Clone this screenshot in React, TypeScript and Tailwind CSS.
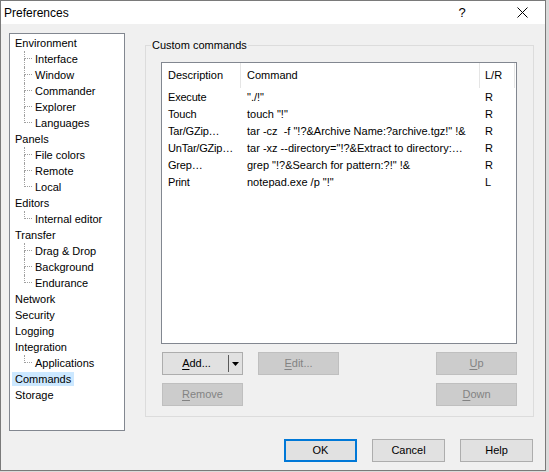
import React from "react";

type Node = { label: string; children?: string[]; selected?: boolean };

const TREE: Node[] = [
  { label: "Environment", children: ["Interface", "Window", "Commander", "Explorer", "Languages"] },
  { label: "Panels", children: ["File colors", "Remote", "Local"] },
  { label: "Editors", children: ["Internal editor"] },
  { label: "Transfer", children: ["Drag & Drop", "Background", "Endurance"] },
  { label: "Network" },
  { label: "Security" },
  { label: "Logging" },
  { label: "Integration", children: ["Applications"] },
  { label: "Commands", selected: true },
  { label: "Storage" },
];

const COMMANDS = [
  { desc: "Execute", cmd: "\"./!\"", side: "R" },
  { desc: "Touch", cmd: "touch \"!\"", side: "R" },
  { desc: "Tar/GZip…", cmd: "tar -cz  -f \"!?&Archive Name:?archive.tgz!\" !&", side: "R" },
  { desc: "UnTar/GZip…", cmd: "tar -xz --directory=\"!?&Extract to directory:…", side: "R" },
  { desc: "Grep…", cmd: "grep \"!?&Search for pattern:?!\" !&", side: "R" },
  { desc: "Print", cmd: "notepad.exe /p \"!\"", side: "L" },
];

const TreeChild = ({ label, last }: { label: string; last: boolean }) => (
  <div className="flex h-[16px] items-center">
    <div className="ml-[12px] flex h-[16px] w-[8px] flex-col">
      <div className="h-[8px] border-b border-l border-dotted border-[#a0a0a0]" />
      <div className={last ? "h-[8px]" : "h-[8px] border-l border-dotted border-[#a0a0a0]"} />
    </div>
    <span className="px-[3px] leading-[14px]">{label}</span>
  </div>
);

const PushButton = ({
  children,
  disabled,
  focused,
  className = "",
}: {
  children: React.ReactNode;
  disabled?: boolean;
  focused?: boolean;
  className?: string;
}) => (
  <div
    className={`flex h-[23px] items-center justify-center ${
      disabled
        ? "border border-[#bfbfbf] bg-[#cccccc] text-[#838383]"
        : focused
        ? "border-2 border-[#0078d7] bg-[#e1e1e1] text-black"
        : "border border-[#adadad] bg-[#e1e1e1] text-black"
    } ${className}`}
  >
    {children}
  </div>
);

export default function App() {
  return (
    <div className="h-[472px] w-[549px] bg-[#dadada] font-['Liberation_Sans',Arial,sans-serif] text-[11px] text-black">
      <div className="flex h-[471px] w-[546px] flex-col border border-[#7a7a7a] bg-[#f0f0f0]">
        {/* title bar */}
        <div className="flex h-[23px] items-center bg-white">
          <span className="pl-[3px] text-[12px]">Preferences</span>
          <span className="ml-auto w-[46px] text-center text-[13px]">?</span>
          <span className="ml-[14px] flex w-[46px] items-center justify-center">
            <svg width="11" height="11" viewBox="0 0 11 11">
              <path d="M0.5 0.5 L10.5 10.5 M10.5 0.5 L0.5 10.5" stroke="#000" strokeWidth="1" />
            </svg>
          </span>
        </div>

        <div className="mt-[9px] flex">
          {/* tree */}
          <div className="ml-[8px] h-[398px] w-[116px] border border-[#828790] bg-white pl-[2px] pt-[1px]">
            {TREE.map((n) => (
              <div key={n.label}>
                <div className="flex h-[16px] items-center">
                  <span className={`px-[3px] leading-[14px] ${n.selected ? "bg-[#cce8ff]" : ""}`}>{n.label}</span>
                </div>
                {n.children?.map((c, i) => (
                  <TreeChild key={c} label={c} last={i === n.children!.length - 1} />
                ))}
              </div>
            ))}
          </div>

          {/* group box */}
          <div className="relative ml-[20px] mt-[12px] h-[372px] w-[389px] border border-[#dcdcdc] pl-[15px] pt-[16px]">
            <span className="absolute left-[5px] top-[-8px] bg-[#f0f0f0] px-[1px] leading-[14px]">Custom commands</span>

            <div className="h-[282px] w-[356px] border border-[#828790] bg-white">
              <div className="flex h-[26px] items-start">
                <div className="flex h-[25px] w-[79px] items-center border-r border-[#e5e5e5] pl-[6px]">Description</div>
                <div className="flex h-[25px] w-[239px] items-center border-r border-[#e5e5e5] pl-[6px]">Command</div>
                <div className="flex h-[25px] w-[35px] items-center border-r border-[#e5e5e5] pl-[5px]">L/R</div>
              </div>
              {COMMANDS.map((r) => (
                <div key={r.desc} className="flex h-[17px] items-center whitespace-pre">
                  <div className="w-[79px] shrink-0 pl-[6px] tracking-[-0.2px]">{r.desc}</div>
                  <div className="w-[239px] shrink-0 overflow-hidden pl-[6px]">{r.cmd}</div>
                  <div className="w-[35px] shrink-0 pl-[5px]">{r.side}</div>
                </div>
              ))}
            </div>

            <div className="mt-[8px] flex w-[356px]">
              <div className="ml-[1px] flex h-[23px] w-[81px] items-center border border-[#adadad] bg-[#e1e1e1]">
                <span className="flex-1 pl-[2px] text-center">
                  <span className="underline underline-offset-[2px]">A</span>dd...
                </span>
                <span className="h-[17px] w-px bg-[#5a5a5a]" />
                <span className="flex w-[13px] items-center justify-center">
                  <svg width="7" height="4" viewBox="0 0 7 4">
                    <path d="M0 0 H7 L3.5 4 Z" fill="#000" />
                  </svg>
                </span>
              </div>
              <PushButton disabled className="ml-[15px] w-[81px]">
                <span>
                  <span className="underline underline-offset-[2px]">E</span>dit...
                </span>
              </PushButton>
              <PushButton disabled className="ml-auto w-[81px]">
                <span>
                  <span className="underline underline-offset-[2px]">U</span>p
                </span>
              </PushButton>
            </div>
            <div className="mt-[8px] flex w-[356px]">
              <PushButton disabled className="ml-[1px] w-[81px]">
                <span>
                  <span className="underline underline-offset-[2px]">R</span>emove
                </span>
              </PushButton>
              <PushButton disabled className="ml-auto w-[81px]">
                <span>
                  <span className="underline underline-offset-[2px]">D</span>own
                </span>
              </PushButton>
            </div>
          </div>
        </div>

        {/* dialog buttons */}
        <div className="mt-[8px] flex justify-end gap-[15px] pr-[12px]">
          <PushButton focused className="w-[73px]">OK</PushButton>
          <PushButton className="w-[73px]">Cancel</PushButton>
          <PushButton className="w-[73px]">Help</PushButton>
        </div>
      </div>
    </div>
  );
}
